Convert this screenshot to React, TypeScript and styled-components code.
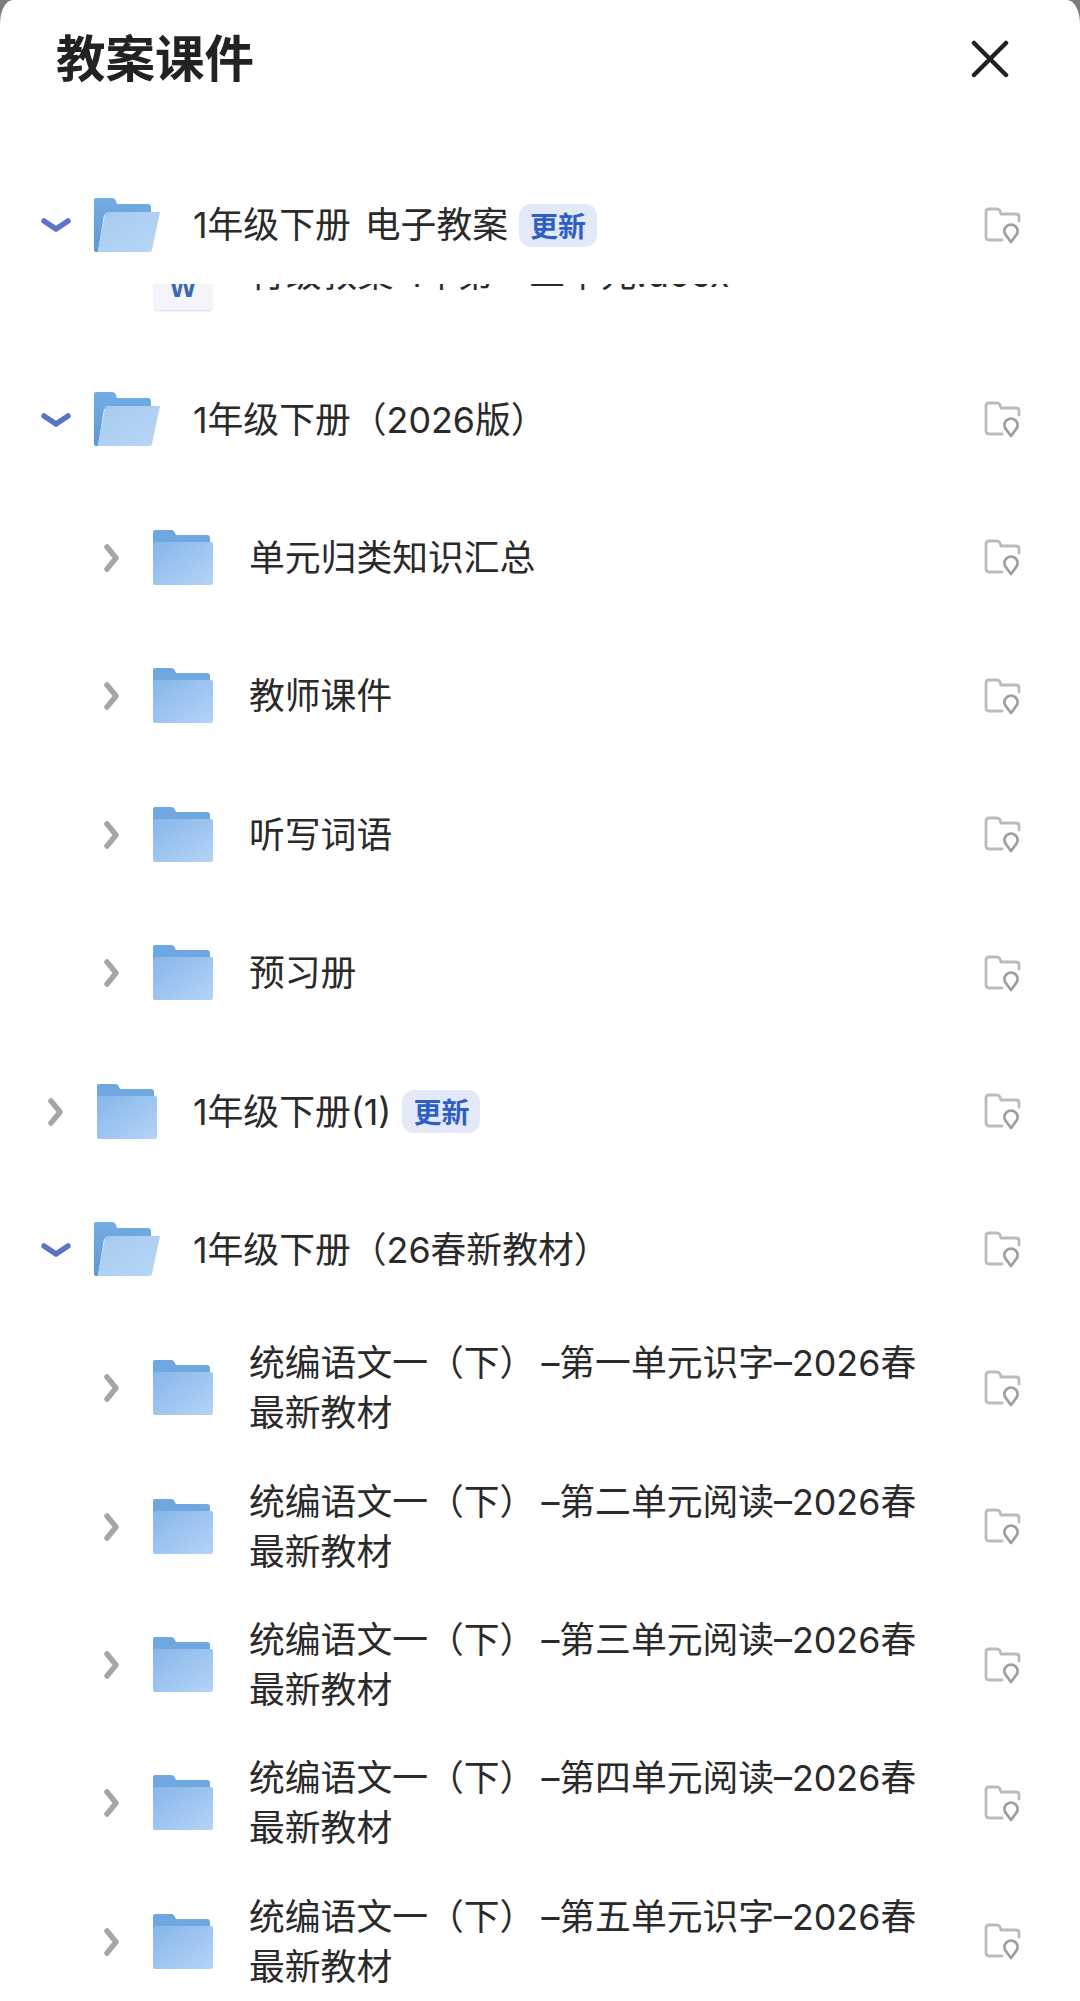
import React from "react";
import styled, { createGlobalStyle } from "styled-components";

const Global = createGlobalStyle`
  html, body { margin: 0; padding: 0; background: #7d7d7d; }
  body { font-family: "Inter", "Noto Sans CJK SC", sans-serif; }
`;

const Sheet = styled.div`
  width: 1080px;
  height: 2001px;
  background: #fff;
  border-radius: 13px 13px 0 0 / 24px 24px 0 0;
  overflow: hidden;
`;

const Header = styled.header`
  height: 117px;
  padding: 0 71px 0 56px;
  display: flex;
  align-items: center;
  justify-content: space-between;
`;

const Title = styled.h1`
  margin: 0 0 5px;
  font: 700 49.5px/60px "Noto Sans CJK SC", sans-serif;
  color: #222;
`;

const List = styled.div`
  padding-top: 39px;
`;

const RowBox = styled.div<{ $indent: boolean }>`
  height: 138.4px;
  display: flex;
  align-items: center;
  padding: 0 58px 0 ${(p) => (p.$indent ? 96 : 40)}px;
`;

const ChevronSlot = styled.div`
  width: 32px;
  height: 32px;
  flex: none;
  display: flex;
  align-items: center;
  justify-content: center;
`;

const FolderSlot = styled.div`
  margin-left: 20px;
  margin-top: -1px;
  width: 70px;
  flex: none;
  display: flex;
  justify-content: center;
`;

const Name = styled.div`
  margin-left: 31px;
  font: 400 35.8px/50px "Inter", "Noto Sans CJK SC", sans-serif;
  word-spacing: 4px;
  color: #2a2a2a;
`;

const Label = styled.div`
  flex: 1;
  min-width: 0;
  display: flex;
  align-items: center;
`;

const WrapName = styled(Name)`
  max-width: 690px;
`;

const WideParen = styled.span`
  letter-spacing: 6px;
`;

const Badge = styled.span`
  margin-left: 11px;
  padding: 0 11px;
  height: 43px;
  border-radius: 12px;
  background: #e4e9f8;
  color: #2f5fc4;
  font: 700 28px/43px "Noto Sans CJK SC", sans-serif;
`;

const ClippedRow = styled.div`
  height: 31px;
  overflow: hidden;
  position: relative;
  margin-top: -10px;
  margin-bottom: 35px;
`;

const ClippedInner = styled.div`
  position: absolute;
  left: 154px;
  right: 58px;
  bottom: 0;
  height: 70px;
  display: flex;
  align-items: center;
`;

const DocIcon = styled.div`
  width: 58px;
  height: 60px;
  flex: none;
  border-radius: 4px;
  background: #f3f5fa;
  box-shadow: 0 1px 2px #d5d9e2;
  color: #3f67ad;
  font: 700 28px/76px "Liberation Sans", sans-serif;
  text-align: center;
  overflow: hidden;
`;

const DocName = styled(Name)`
  margin-left: 38px;
  padding-bottom: 12px;
  white-space: nowrap;
`;

const ChevronDown = () => (
  <svg width="30" height="16" viewBox="0 0 30 16">
    <path d="M3 4l12 8 12-8" fill="none" stroke="#5b73c8" strokeWidth="5.5" strokeLinecap="round" strokeLinejoin="round" />
  </svg>
);

const ChevronRight = () => (
  <svg width="16" height="28" viewBox="0 0 16 28">
    <path d="M3 3l9 11-9 11" fill="none" stroke="#a6a6a6" strokeWidth="5.5" strokeLinecap="round" strokeLinejoin="round" />
  </svg>
);

const ClosedFolder = ({ id }: { id: string }) => (
  <svg width="60" height="55" viewBox="0 0 60 55">
    <defs>
      <linearGradient id={id} x1="0" y1="0" x2="1" y2="1">
        <stop offset="0" stopColor="#86b6ea" />
        <stop offset="1" stopColor="#b5d4f6" />
      </linearGradient>
    </defs>
    <path d="M2 0h16q3 0 4 3l1 2h31q3 0 3 3v6H0V2q0-2 2-2z" fill="#6fa8e0" />
    <path d="M2 12h56q2 0 2 2v39q0 2-2 2H2q-2 0-2-2V14q0-2 2-2z" fill={`url(#${id})`} />
  </svg>
);

const OpenFolder = ({ id }: { id: string }) => (
  <svg width="66" height="54" viewBox="0 0 66 54">
    <defs>
      <linearGradient id={id} x1="0" y1="0" x2="1" y2="1">
        <stop offset="0" stopColor="#a6caf0" />
        <stop offset="1" stopColor="#b9d7f6" />
      </linearGradient>
      <linearGradient id={`${id}b`} x1="0" y1="0" x2="0" y2="1">
        <stop offset="0" stopColor="#73ade4" />
        <stop offset="1" stopColor="#5b98d6" />
      </linearGradient>
    </defs>
    <path d="M2 0h16q3 0 4 3l1 3h31q3 0 3 3v8H10L4 54H2q-2 0-2-2V2q0-2 2-2z" fill={`url(#${id}b)`} />
    <path d="M14 14h52l-8 38q-.5 2-3 2H4q-1 0 0-2l7-36q.5-2 3-2z" fill={`url(#${id})`} />
  </svg>
);

const PinFolder = () => (
  <svg width="38" height="37" viewBox="0 0 38 37" fill="none" stroke="#bbb" strokeWidth="2.8">
    <path d="M18 33H5q-3 0-3-3V5q0-3 3-3h8q2 0 3 2l1 3h15q3 0 3 3v4" strokeLinejoin="round" strokeLinecap="round" />
    <path d="M27 35l-5.200-7a6.500 6.500 0 1 1 10.400 0z" stroke="#9e9e9e" strokeLinejoin="round" />
  </svg>
);

const Close = styled.svg`
  width: 38px;
  height: 38px;
  stroke: #222;
  stroke-width: 4.5;
  stroke-linecap: round;
`;

type RowData = { name: string; level: 0 | 1; open?: boolean; badge?: boolean };

const Row = ({ name, level, open, badge, id }: RowData & { id: string }) => {
  const wraps = name.length > 20;
  const parts = name.split("）–");
  return (
    <RowBox $indent={level === 1}>
      <ChevronSlot>{open ? <ChevronDown /> : <ChevronRight />}</ChevronSlot>
      <FolderSlot>{open ? <OpenFolder id={id} /> : <ClosedFolder id={id} />}</FolderSlot>
      <Label>
        {wraps ? (
          <WrapName>
            {parts[0]}
            <WideParen>）</WideParen>–{parts[1]}
          </WrapName>
        ) : (
          <Name>{name}</Name>
        )}
        {badge && <Badge>更新</Badge>}
      </Label>
      <PinFolder />
    </RowBox>
  );
};

const first: RowData = { name: "1年级下册 电子教案", level: 0, open: true, badge: true };
const rest: RowData[] = [
  { name: "1年级下册（2026版）", level: 0, open: true },
  { name: "单元归类知识汇总", level: 1 },
  { name: "教师课件", level: 1 },
  { name: "听写词语", level: 1 },
  { name: "预习册", level: 1 },
  { name: "1年级下册(1)", level: 0, badge: true },
  { name: "1年级下册（26春新教材）", level: 0, open: true },
  { name: "统编语文一（下）–第一单元识字–2026春最新教材", level: 1 },
  { name: "统编语文一（下）–第二单元阅读–2026春最新教材", level: 1 },
  { name: "统编语文一（下）–第三单元阅读–2026春最新教材", level: 1 },
  { name: "统编语文一（下）–第四单元阅读–2026春最新教材", level: 1 },
  { name: "统编语文一（下）–第五单元识字–2026春最新教材", level: 1 },
];

export default function App() {
  return (
    <Sheet>
      <Global />
      <Header>
        <Title>教案课件</Title>
        <Close viewBox="0 0 38 38">
          <path d="M3 3l32 32M35 3L3 35" />
        </Close>
      </Header>
      <List>
        <Row {...first} id="f0" />
        <ClippedRow>
          <ClippedInner>
            <DocIcon>W</DocIcon>
            <DocName>行级教案 1年第一二单元.docx</DocName>
          </ClippedInner>
        </ClippedRow>
        {rest.map((r, i) => (
          <Row key={r.name} {...r} id={`f${i + 1}`} />
        ))}
      </List>
    </Sheet>
  );
}
